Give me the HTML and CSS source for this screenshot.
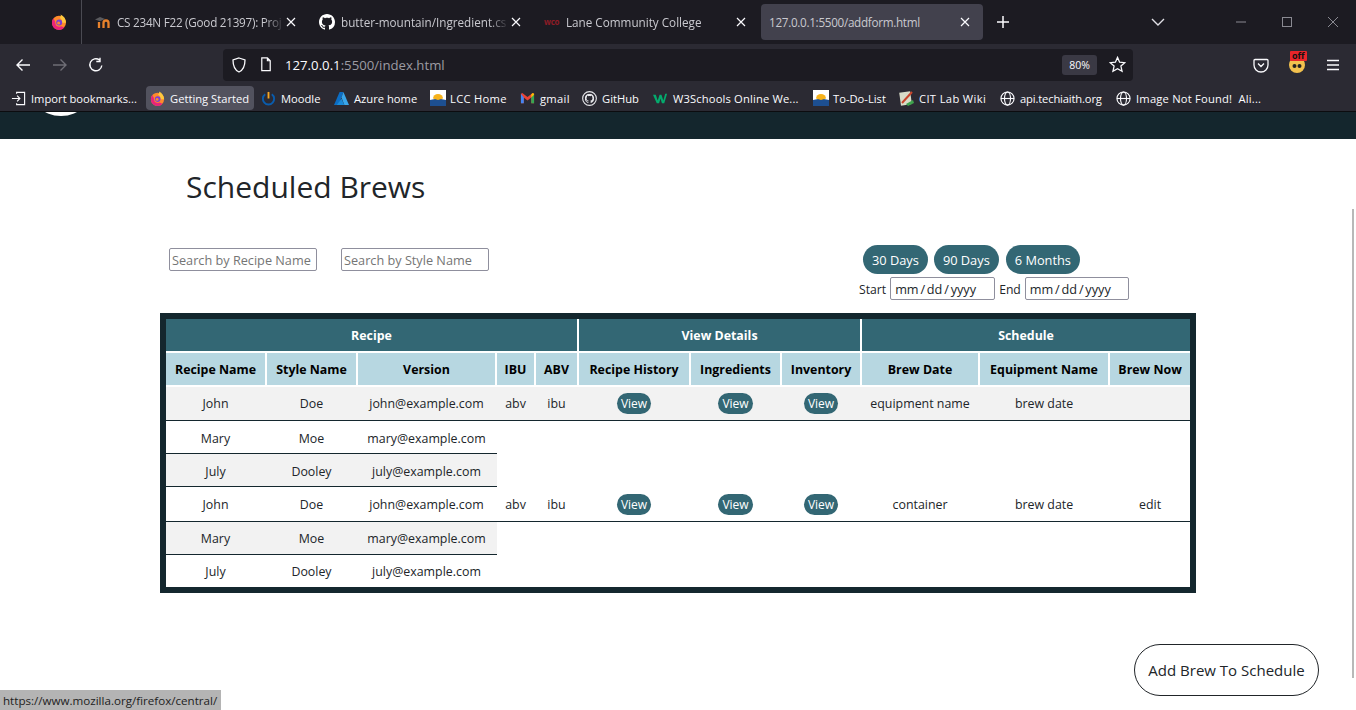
FILE: index.html
```html
<!DOCTYPE html>
<html lang="en">
<head>
  <meta charset="UTF-8">
  <meta name="viewport" content="width=device-width, initial-scale=1.0">
  <title>Scheduled Brews</title>
  <link rel="stylesheet" href="styles.css">
</head>
<body>
  <svg class="sprites" aria-hidden="true">
    <symbol id="i-github" viewBox="0 0 16 16"><path fill="currentColor" d="M8 0C3.58 0 0 3.58 0 8c0 3.54 2.29 6.53 5.47 7.59.4.07.55-.17.55-.38 0-.19-.01-.82-.01-1.49-2.01.37-2.53-.49-2.69-.94-.09-.23-.48-.94-.82-1.13-.28-.15-.68-.52-.01-.53.63-.01 1.08.58 1.23.82.72 1.21 1.87.87 2.33.66.07-.52.28-.87.51-1.07-1.78-.2-3.64-.89-3.64-3.95 0-.87.31-1.59.82-2.15-.08-.2-.36-1.02.08-2.12 0 0 .67-.21 2.2.82.64-.18 1.32-.27 2-.27.68 0 1.36.09 2 .27 1.53-1.04 2.2-.82 2.2-.82.44 1.1.16 1.92.08 2.12.51.56.82 1.27.82 2.15 0 3.07-1.87 3.75-3.65 3.95.29.25.54.73.54 1.48 0 1.07-.01 1.93-.01 2.2 0 .21.15.46.55.38A8.013 8.013 0 0016 8c0-4.42-3.58-8-8-8z"/></symbol>
    <symbol id="i-globe" viewBox="0 0 16 16"><g fill="none" stroke="currentColor" stroke-width="1.2"><circle cx="8" cy="8" r="7"/><ellipse cx="8" cy="8" rx="3.2" ry="7"/><path d="M1 8h14"/></g></symbol>
    <symbol id="i-close" viewBox="0 0 10 10"><path d="M1 1l8 8M9 1l-8 8" fill="none" stroke="currentColor" stroke-width="1.2"/></symbol>
    <symbol id="i-firefox" viewBox="0 0 16 16">
      <circle cx="8" cy="8.800" r="7" fill="#ff8a2b"/>
      <path d="M9.500.5c3.500 1.500 5.500 4.700 5.500 8.300h-4C11.500 6 10 4.500 8.500 4 10 3 10 1.500 9.500.5z" fill="#ffc83d"/>
      <path d="M1 8.800c0-1.700.5-3.300 1.600-4.700 0 1.300.5 2.100 1.200 2.600l1 4.300c1 1.500 3.500 2.200 5.500 1.300l3 1.200A7 7 0 0 1 1 8.800z" fill="#e8247c"/>
      <circle cx="8.200" cy="8.600" r="3" fill="#7a3fd6"/>
      <circle cx="7.600" cy="9" r="1.500" fill="#ff8a2b"/>
    </symbol>
    <symbol id="i-lcc" viewBox="0 0 16 16">
      <rect width="16" height="16" fill="#fff"/>
      <path d="M0 10l8-1.500L16 10v6H0z" fill="#1d4f91"/>
      <path d="M3 8.500a5 4.500 0 0 1 10 0l-5 1.500z" fill="#f6b21b"/>
    </symbol>
  </svg>

  <div class="browser">
    <div class="tabbar">
      <div class="ff-slot"><svg class="ico16"><use href="#i-firefox"/></svg></div>
      <div class="tab tab-long">
        <svg class="favicon" viewBox="0 0 16 14"><path d="M0 4.500L5 2l5 2-5 2.200z" fill="#5a5a5e"/><path d="M4 13V7M8.500 13V8a2.300 2.300 0 0 1 5 0v5" stroke="#e8822c" stroke-width="2.300" fill="none"/></svg>
        <span class="tab-title">CS 234N F22 (Good 21397): Proj</span>
        <svg class="tab-x"><use href="#i-close"/></svg>
      </div>
      <div class="tab">
        <svg class="favicon favicon-gh"><use href="#i-github"/></svg>
        <span class="tab-title">butter-mountain/Ingredient.cs</span>
        <svg class="tab-x"><use href="#i-close"/></svg>
      </div>
      <div class="tab">
        <span class="favicon favicon-wco">wco</span>
        <span class="tab-title">Lane Community College</span>
        <svg class="tab-x"><use href="#i-close"/></svg>
      </div>
      <div class="tab tab-active">
        <span class="tab-title">127.0.0.1:5500/addform.html</span>
        <svg class="tab-x"><use href="#i-close"/></svg>
      </div>
      <svg class="new-tab" viewBox="0 0 14 14"><path d="M7 1v12M1 7h12" stroke="currentColor" stroke-width="1.500" fill="none"/></svg>
      <svg class="tab-list" viewBox="0 0 14 8"><path d="M1 1l6 6 6-6" stroke="currentColor" stroke-width="1.400" fill="none"/></svg>
      <div class="win-btns">
        <svg viewBox="0 0 12 12"><path d="M1 6h10" stroke="currentColor" fill="none"/></svg>
        <svg viewBox="0 0 12 12"><rect x="1.500" y="1.500" width="9" height="9" stroke="currentColor" fill="none"/></svg>
        <svg viewBox="0 0 12 12"><path d="M1 1l10 10M11 1L1 11" stroke="currentColor" fill="none"/></svg>
      </div>
    </div>

    <div class="toolbar">
      <svg class="tool-ico back" viewBox="0 0 16 16"><path d="M15 8H2M7.500 2.500L2 8l5.500 5.500" stroke="currentColor" stroke-width="1.400" fill="none"/></svg>
      <svg class="tool-ico fwd" viewBox="0 0 16 16"><path d="M1 8h13M8.500 2.500L14 8l-5.500 5.500" stroke="currentColor" stroke-width="1.400" fill="none"/></svg>
      <svg class="tool-ico reload" viewBox="0 0 16 16"><path d="M13.800 8.500A6 6 0 1 1 11.500 3M12 .8v3.700H8.300" stroke="currentColor" stroke-width="1.400" fill="none"/></svg>
      <div class="urlbar">
        <svg class="url-shield" viewBox="0 0 16 16"><path d="M8 1l6 2c0 6-1.500 10-6 12C3.500 13 2 9 2 3z" stroke="currentColor" stroke-width="1.300" fill="none"/></svg>
        <svg class="url-page" viewBox="0 0 12 16"><path d="M1.500 1h6l3 3v10.500h-9zM7.500 1v3h3" stroke="currentColor" stroke-width="1.300" fill="none"/></svg>
        <span class="url-text">127.0.0.1<span class="url-dim">:5500/index.html</span></span>
        <span class="zoom-pill">80%</span>
        <svg class="url-star" viewBox="0 0 16 16"><path d="M8 1.300l2 4.500 4.900.5-3.700 3.200 1.100 4.900L8 12l-4.300 2.400 1.100-4.900L1.100 6.300 6 5.800z" stroke="currentColor" stroke-width="1.200" fill="none"/></svg>
      </div>
      <svg class="tool-ico pocket" viewBox="0 0 16 16"><path d="M2 2.500h12a1 1 0 0 1 1 1V8a7 7 0 0 1-14 0V3.500a1 1 0 0 1 1-1zM5 6.500l3 3 3-3" stroke="currentColor" stroke-width="1.300" fill="none"/></svg>
      <div class="ext-badge">
        <svg viewBox="0 0 16 16"><circle cx="8" cy="8" r="8" fill="#f2c14e"/><circle cx="5.500" cy="9" r="2" fill="#222"/><circle cx="10.500" cy="9" r="2" fill="#222"/></svg>
        <span class="ext-off">off</span>
      </div>
      <svg class="tool-ico menu" viewBox="0 0 14 12"><path d="M1 1.500h12M1 6h12M1 10.500h12" stroke="currentColor" stroke-width="1.300" fill="none"/></svg>
    </div>

    <div class="bookmarks">
      <a class="bm bm-import"><svg class="bm-ico" viewBox="0 0 16 16"><path d="M6 3V1.500h8.500v13H6V13M1 8h8M6.500 5l3 3-3 3" stroke="#fbfbfe" stroke-width="1.200" fill="none"/></svg>Import bookmarks...</a>
      <a class="bm bm-started"><svg class="bm-ico"><use href="#i-firefox"/></svg>Getting Started</a>
      <a class="bm bm-moodle"><svg class="bm-ico" viewBox="0 0 16 16"><path d="M4.500 3.500a6 6 0 1 0 7 0" stroke="#0a5cad" stroke-width="2" fill="none"/><path d="M8 1v7" stroke="#f5a623" stroke-width="2"/></svg>Moodle</a>
      <a class="bm bm-azure"><svg class="bm-ico" viewBox="0 0 16 16"><path d="M6 1h4L5 15H0z" fill="#0c6dc4"/><path d="M10 1l6 14h-5L8 7z" fill="#3aa6ea"/><path d="M8 8l3 7H3z" fill="#1a8ad8"/></svg>Azure home</a>
      <a class="bm bm-lcc"><svg class="bm-ico bm-square"><use href="#i-lcc"/></svg>LCC Home</a>
      <a class="bm bm-gmail"><svg class="bm-ico" viewBox="0 0 16 16"><path d="M1 3v10h3V7l4 3 4-3v6h3V3l-1.500-1L8 6.500 2.500 2z" fill="#ea4335"/><path d="M1 3v10h3V7z" fill="#4285f4"/><path d="M15 3v10h-3V7z" fill="#34a853"/><path d="M12 7V3.500l1.500-1.500L15 3v1z" fill="#fbbc04"/></svg>gmail</a>
      <a class="bm bm-github"><svg class="bm-ico bm-gh" viewBox="0 0 16 16"><circle cx="8" cy="8" r="7.300" fill="none" stroke="currentColor" stroke-width="1.200"/><use href="#i-github" x="3" y="3" width="10" height="10"/></svg>GitHub</a>
      <a class="bm bm-w3"><svg class="bm-ico" viewBox="0 0 16 16"><path d="M0 4h3l2 6 2-6h2l2 6 2-7h2l-3 10h-2.500L8 8l-1.500 5H4z" fill="#04aa6d"/></svg>W3Schools Online We...</a>
      <a class="bm bm-todo"><svg class="bm-ico bm-square"><use href="#i-lcc"/></svg>To-Do-List</a>
      <a class="bm bm-cit"><svg class="bm-ico bm-square" viewBox="0 0 16 16"><rect x="1" y="2" width="11" height="13" fill="#d9dcc8" transform="rotate(-8 6 8)"/><path d="M3 13L13 2" stroke="#c9452c" stroke-width="2"/><path d="M7 14l7-4 1 3-6 3z" fill="#3fa34d"/></svg>CIT Lab Wiki</a>
      <a class="bm bm-api"><svg class="bm-ico"><use href="#i-globe"/></svg>api.techiaith.org</a>
      <a class="bm bm-img"><svg class="bm-ico"><use href="#i-globe"/></svg>Image Not Found!&nbsp; Ali...</a>
    </div>
  </div>

  <div class="site-band"><div class="site-logo"></div></div>

  <main class="page">
    <h1 class="page-title">Scheduled Brews</h1>

    <div class="filters">
      <div class="searches">
        <input class="field" type="text" placeholder="Search by Recipe Name">
        <input class="field" type="text" placeholder="Search by Style Name">
      </div>
      <div class="dates">
        <div class="ranges">
          <button class="range-btn">30 Days</button>
          <button class="range-btn">90 Days</button>
          <button class="range-btn range-last">6 Months</button>
        </div>
        <div class="date-row">
          <label>Start</label>
          <input class="field date-field" type="text" value="mm / dd / yyyy">
          <label>End</label>
          <input class="field date-field date-end" type="text" value="mm / dd / yyyy">
        </div>
      </div>
    </div>

    <div class="table-wrap">
      <table class="brews">
        <colgroup>
          <col class="c1"><col class="c2"><col class="c3"><col class="c4"><col class="c5"><col class="c6">
          <col class="c7"><col class="c8"><col class="c9"><col class="c10"><col class="c11">
        </colgroup>
        <thead>
          <tr class="group-row">
            <th colspan="5">Recipe</th>
            <th colspan="3">View Details</th>
            <th colspan="3">Schedule</th>
          </tr>
          <tr class="head-row">
            <th>Recipe Name</th><th>Style Name</th><th>Version</th><th>IBU</th><th>ABV</th>
            <th>Recipe History</th><th>Ingredients</th><th>Inventory</th>
            <th>Brew Date</th><th>Equipment Name</th><th>Brew Now</th>
          </tr>
        </thead>
        <tbody>
          <tr class="row-first">
            <td>John</td><td>Doe</td><td>john@example.com</td><td>abv</td><td>ibu</td>
            <td><a class="view-btn">View</a></td><td><a class="view-btn">View</a></td><td><a class="view-btn">View</a></td>
            <td>equipment name</td><td>brew date</td><td></td>
          </tr>
          <tr class="row-sub"><td>Mary</td><td>Moe</td><td>mary@example.com</td></tr>
          <tr class="row-sub"><td>July</td><td>Dooley</td><td>july@example.com</td></tr>
          <tr class="row-second">
            <td>John</td><td>Doe</td><td>john@example.com</td><td>abv</td><td>ibu</td>
            <td><a class="view-btn">View</a></td><td><a class="view-btn">View</a></td><td><a class="view-btn">View</a></td>
            <td>container</td><td>brew date</td><td>edit</td>
          </tr>
          <tr class="row-low"><td>Mary</td><td>Moe</td><td>mary@example.com</td></tr>
          <tr class="row-last"><td>July</td><td>Dooley</td><td>july@example.com</td></tr>
        </tbody>
      </table>
    </div>

    <div class="add-row">
      <button class="add-btn">Add Brew To Schedule</button>
    </div>
  </main>

  <div class="scroll-thumb"></div>
  <div class="status-tip">https://www.mozilla.org/firefox/central/</div>
</body>
</html>
```

FILE: styles.css
```css
html, body {
  margin: 0;
  padding: 0;
  height: 710px;
  overflow: hidden;
  background-color: #fff;
  font-family: "Open Sans", "Noto Sans", Arial, sans-serif;
  color: #212529;
}
.sprites {
  display: none;
}

/* Browser chrome */
.browser {
  color: #fbfbfe;
}
.tabbar {
  height: 44px;
  background-color: #1c1b22;
  display: flex;
  align-items: center;
  font-size: 11.7px;
}
.ff-slot {
  width: 82px;
  height: 44px;
  border-right: 1px solid #4a4a52;
  box-sizing: border-box;
  display: flex;
  align-items: center;
  padding-left: 51px;
}
.ico16 {
  width: 16px;
  height: 16px;
}
.tab {
  width: 225px;
  height: 36px;
  display: flex;
  align-items: center;
  padding-left: 13px;
  box-sizing: border-box;
  position: relative;
  color: #c9c9cf;
}
.tab-long {
  width: 224px;
}
.tab-title {
  width: 168px;
  white-space: nowrap;
  overflow: hidden;
  -webkit-mask-image: linear-gradient(to right, #000 88%, transparent);
  mask-image: linear-gradient(to right, #000 88%, transparent);
}
.tab-long .tab-title {
  letter-spacing: -.25px;
}
.favicon {
  width: 16px;
  height: 14px;
  margin-right: 6px;
  flex: none;
}
.favicon-gh {
  color: #fff;
  height: 16px;
}
.favicon-wco {
  font-size: 8px;
  letter-spacing: -.2px;
  font-weight: 700;
  color: #8e1c26;
  line-height: 14px;
}
.tab-x {
  width: 10px;
  height: 10px;
  color: #fbfbfe;
  position: absolute;
  right: 10px;
  top: 13px;
}
.tab-active {
  width: 222px;
  margin-left: 5px;
  padding-left: 8px;
  background-color: #42414d;
  border-radius: 4px;
}
.tab-active .tab-title {
  width: 190px;
  letter-spacing: -.3px;
  -webkit-mask-image: none;
  mask-image: none;
}
.tab-active .tab-x {
  right: 13px;
}
.new-tab {
  width: 14px;
  height: 14px;
  margin-left: 13px;
}
.tab-list {
  width: 14px;
  height: 8px;
  margin-left: 141px;
  color: #e0e0e6;
}
.win-btns {
  display: flex;
  gap: 34px;
  margin-left: 70px;
  color: #8a8a92;
}
.win-btns svg {
  width: 12px;
  height: 12px;
}

.toolbar {
  height: 41px;
  background-color: #2b2a33;
  display: flex;
  align-items: center;
}
.tool-ico {
  width: 16px;
  height: 16px;
  flex: none;
}
.back {
  margin-left: 15px;
}
.fwd {
  margin-left: 21px;
  color: #6f6e76;
}
.reload {
  margin-left: 20px;
}
.urlbar {
  width: 910px;
  height: 32px;
  margin-left: 119px;
  background-color: #1c1b22;
  border-radius: 4px;
  display: flex;
  align-items: center;
  font-size: 13.2px;
}
.url-shield {
  width: 16px;
  height: 16px;
  margin-left: 8px;
}
.url-page {
  width: 12px;
  height: 15px;
  margin-left: 13px;
}
.url-text {
  margin-left: 13px;
  flex: 1;
}
.url-dim {
  color: #9c9ba3;
}
.zoom-pill {
  width: 35px;
  height: 20px;
  line-height: 20px;
  text-align: center;
  font-size: 10.5px;
  background-color: #3a3944;
  border-radius: 3px;
}
.url-star {
  width: 17px;
  height: 17px;
  margin: 0 7px 0 12px;
}
.pocket {
  margin-left: 120px;
}
.ext-badge {
  width: 16px;
  height: 16px;
  margin-left: 20px;
  position: relative;
}
.ext-badge svg {
  width: 16px;
  height: 16px;
  display: block;
}
.ext-off {
  position: absolute;
  top: -6px;
  left: 1px;
  background-color: #e8252a;
  color: #111;
  font-size: 9px;
  font-weight: 700;
  line-height: 10px;
  padding: 0 2px;
  border-radius: 1px;
}
.menu {
  width: 14px;
  height: 12px;
  margin-left: 21px;
}

.bookmarks {
  height: 27px;
  background-color: #2b2a33;
  display: flex;
  align-items: center;
  font-size: 11.2px;
  padding-left: 6px;
  white-space: nowrap;
  box-sizing: border-box;
  border-bottom: 1px solid #0c0c0f;
}
.bm {
  display: flex;
  align-items: center;
  height: 24px;
  padding-left: 5px;
  box-sizing: border-box;
  border-radius: 4px;
  flex: none;
}
.bm-ico {
  width: 15px;
  height: 15px;
  margin-right: 5px;
  flex: none;
}
.bm-square {
  width: 16px;
  height: 16px;
  margin-right: 4px;
}
.bm-import { width: 140px; }
.bm-started {
  width: 108px;
  padding-left: 4px;
  margin-right: 2px;
  background-color: #52525e;
}
.bm-moodle { width: 73px; }
.bm-azure { width: 96px; }
.bm-lcc { width: 90px; letter-spacing: .3px; }
.bm-gmail { width: 62px; letter-spacing: .3px; }
.bm-github { width: 71px; }
.bm-w3 { width: 160px; letter-spacing: .15px; }
.bm-todo { width: 86px; }
.bm-cit { width: 101px; letter-spacing: .35px; }
.bm-api { width: 116px; letter-spacing: -.15px; }
.bm-img { letter-spacing: .2px; }
.bm-gh {
  color: #e6e6ea;
}

.site-band {
  height: 27px;
  background-color: #14262d;
  position: relative;
  overflow: hidden;
}
.site-logo {
  position: absolute;
  left: 27px;
  top: -64px;
  width: 68px;
  height: 68px;
  border-radius: 50%;
  background-color: #fff;
}

/* Page */
.page-title {
  margin: 0;
  padding: 26px 0 0 186px;
  font-size: 30px;
  line-height: 44px;
  font-weight: 400;
}
.filters {
  display: flex;
  justify-content: space-between;
  padding: 36px 227px 0 169px;
}
.searches {
  display: flex;
  gap: 24px;
  padding-top: 3px;
  align-items: flex-start;
}
.field {
  box-sizing: border-box;
  width: 148px;
  height: 23px;
  padding: 0 2px;
  border: 1px solid #8f8f9d;
  border-radius: 2px;
  font-family: inherit;
  font-size: 12.7px;
  color: #212529;
}
.field::placeholder {
  color: #757575;
}
.dates {
  width: 270px;
}
.ranges {
  display: flex;
  gap: 6px;
  padding-left: 4px;
}
.range-btn {
  height: 29px;
  padding: 0 9px;
  border: none;
  border-radius: 15px;
  background-color: #336774;
  color: #fff;
  font-family: inherit;
  font-size: 12.8px;
}
.range-last {
  margin-left: 1px;
}
.date-row {
  display: flex;
  align-items: center;
  font-size: 12.2px;
  margin-top: 3px;
  gap: 4px;
}
.date-row label {
  padding-top: 1px;
}
.date-field {
  width: 105px;
  padding-left: 4px;
  word-spacing: -1.5px;
}
.date-end {
  width: 104px;
}

/* Table */
.table-wrap {
  margin: 13px 0 0 160px;
  width: 1036px;
  box-sizing: border-box;
  border: 6px solid #14272e;
}
.brews {
  width: 1024px;
  table-layout: fixed;
  border-collapse: separate;
  border-spacing: 0;
  font-size: 12.4px;
}
.c1 { width: 101px; }
.c2 { width: 91px; }
.c3 { width: 139px; }
.c4 { width: 39px; }
.c5 { width: 43px; }
.c6 { width: 112px; }
.c7 { width: 91px; }
.c8 { width: 80px; }
.c9 { width: 118px; }
.c10 { width: 130px; }
.c11 { width: 80px; }
.brews th {
  padding: 0;
  border-right: 2px solid #fff;
  border-bottom: 2px solid #fff;
  font-size: 12.4px;
  font-weight: 700;
}
.brews th:last-child {
  border-right: none;
}
.group-row th {
  height: 32px;
  background-color: #336774;
  color: #fff;
}
.head-row th {
  height: 32px;
  background-color: #b7d7e1;
  color: #000;
}
.brews td {
  padding: 0 2px 0 0;
  text-align: center;
  border-bottom: 1px solid #14272e;
}
.brews td:nth-child(11) {
  padding-right: 0;
}
.row-first td {
  height: 33px;
}
.row-sub td {
  height: 30px;
  padding-top: 2px;
}
.row-second td {
  height: 34px;
}
.row-low td {
  height: 32px;
}
.row-last td {
  height: 32px;
  border-bottom: none;
}
.row-first td,
.row-sub:nth-child(3) td,
.row-low td {
  background-color: #f2f2f2;
}
.view-btn {
  display: inline-block;
  padding: 0 4px;
  font-size: 12px;
  line-height: 21px;
  border-radius: 11px;
  background-color: #336774;
  color: #fff;
  vertical-align: middle;
}

.add-row {
  display: flex;
  justify-content: flex-end;
  padding: 51px 37px 0 0;
}
.add-btn {
  width: 185px;
  height: 52px;
  border: 1px solid #212529;
  border-radius: 26px;
  background-color: #fff;
  color: #212529;
  font-family: inherit;
  font-size: 15px;
}

/* Overlays */
.scroll-thumb {
  position: absolute;
  left: 1352px;
  top: 209px;
  width: 2px;
  height: 469px;
  background-color: #b8b8b8;
}
.status-tip {
  position: absolute;
  left: 0;
  bottom: 0;
  height: 20px;
  line-height: 22px;
  width: 221px;
  box-sizing: border-box;
  padding-left: 3px;
  background-color: #b4b4b4;
  font-size: 11.6px;
  color: #222;
}
```
